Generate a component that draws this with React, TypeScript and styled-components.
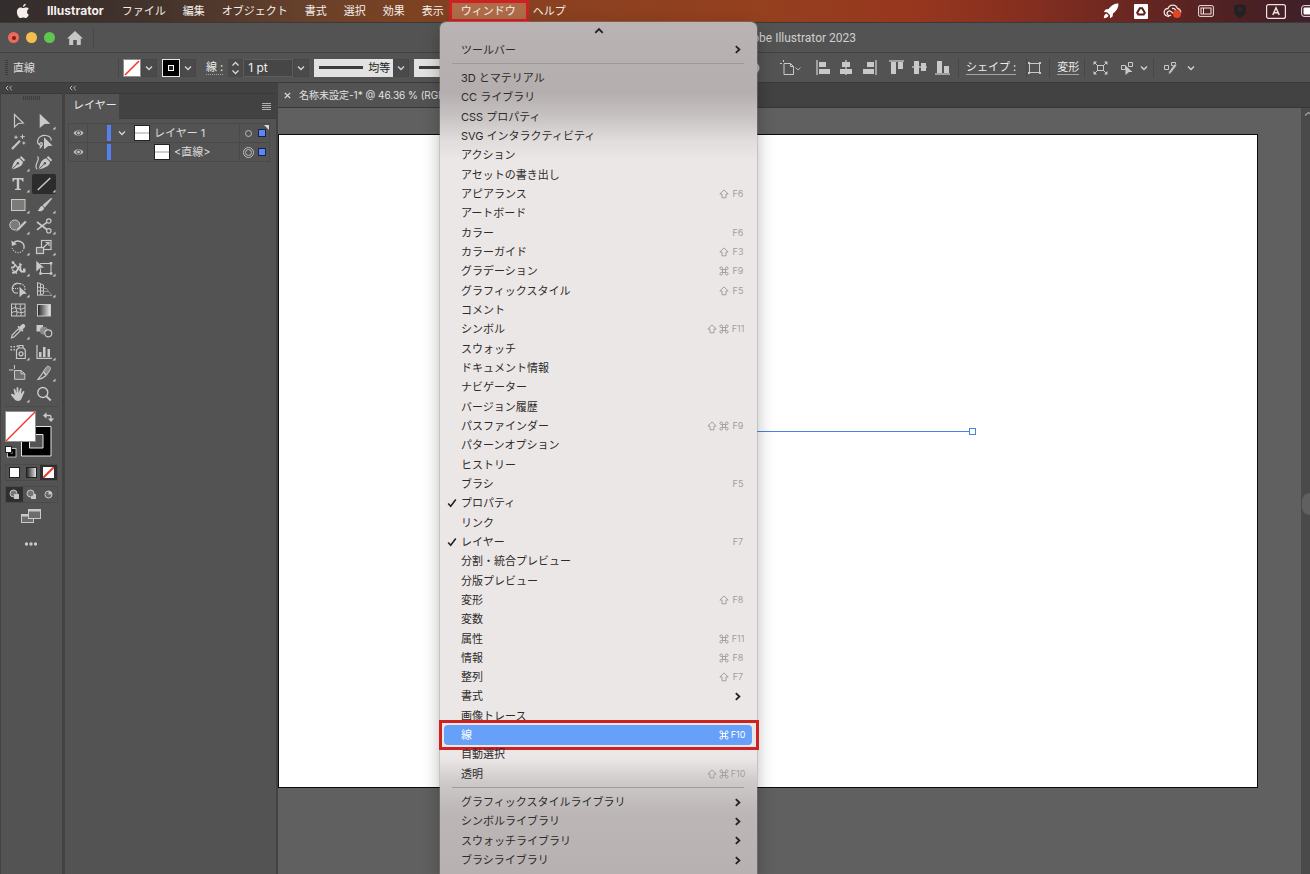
import React from "react";
import styled, { createGlobalStyle, css } from "styled-components";

const GlobalStyle = createGlobalStyle`
  *, *::before, *::after { box-sizing: border-box; }
  body {
    margin: 0;
    background: #535353;
    color: #dcdcdc;
    font: 11px/16px Inter, "Noto Sans CJK JP", sans-serif;
    overflow: hidden;
  }
  button, input {
    margin: 0;
    padding: 0;
    border: 0;
    background: none;
    color: inherit;
    font: inherit;
    text-align: left;
  }
  svg { display: block; flex: none; }
`;

const Screen = styled.div`
  position: relative;
  display: flex;
  flex-direction: column;
  height: 100vh;
  overflow: hidden;
`;

/* ---------- system menu bar ---------- */

const MenuBar = styled.header`
  display: flex;
  align-items: center;
  height: 22px;
  flex: none;
  color: #f4efec;
  overflow: hidden;
  background: linear-gradient(90deg, #332d2d 0%, #43332b 12%, #66402b 23%, #7c4222 31%, #8a4120 42%, #95401f 58%, #97361e 70%, #832e20 79%, #672621 87%, #4b2023 95%, #40202a 100%);
`;

const AppleMark = styled.a`
  display: block;
  padding-left: 16px;
  width: 38px;
`;

const MenuTitles = styled.nav`
  display: flex;
  height: 22px;
  flex: none;
`;

const MenuTitle = styled.button<{ $strong?: boolean; $open?: boolean }>`
  padding: 0 9px 0 8px;
  white-space: nowrap;
  line-height: 20px;
  font-size: 11px;
  ${(p) => p.$strong && css`
    padding: 0 10px 0 9px;
    font-size: 12px;
    font-weight: 700;
  `}
  ${(p) => p.$open && css`
    padding: 0 10px 0 9px;
    margin: 0 -4px;
    background: #ae6c49;
    border: 3px solid #cd2222;
    line-height: 14px;
  `}
`;

const StatusItems = styled.div`
  display: flex;
  align-items: center;
  height: 22px;
  gap: 15px;
  margin-left: auto;
  flex: none;
`;

/* ---------- application window ---------- */

const TitleBar = styled.div`
  display: flex;
  align-items: center;
  flex: none;
  height: 31px;
  padding-left: 8px;
  border-top: 1px solid #3a3a3a;
  border-bottom: 1px solid #424242;
`;

const Lights = styled.div`
  display: flex;
  gap: 7px;
  margin-right: 12px;
`;

const Light = styled.button<{ $color: string }>`
  display: grid;
  place-items: center;
  width: 11px;
  height: 11px;
  border-radius: 50%;
  background: ${(p) => p.$color};
`;

const LightDot = styled.span`
  width: 4px;
  height: 4px;
  border-radius: 50%;
  background: #7a1f18;
`;

const IconButton = styled.button`
  display: block;
  flex: none;
`;

const Rule = styled.span<{ $left?: number; $right?: number }>`
  width: 1px;
  height: 20px;
  flex: none;
  background: #484848;
  margin-left: ${(p) => p.$left ?? 8}px;
  margin-right: ${(p) => p.$right ?? 8}px;
`;

const WindowTitle = styled.h1`
  margin: 0;
  flex: 1;
  padding-right: 454px;
  text-align: right;
  font-family: Roboto, sans-serif;
  font-size: 12px;
  font-weight: 400;
  color: #cfcfcf;
  white-space: nowrap;
`;

const ControlBar = styled.div`
  display: flex;
  align-items: center;
  flex: none;
  height: 29px;
  overflow: hidden;
`;

const ControlStart = styled.div`
  display: flex;
  align-items: center;
  width: 762px;
  flex: none;
  overflow: hidden;
`;

const ControlEnd = styled.div`
  display: flex;
  align-items: center;
  flex: none;
  padding-left: 18px;
`;

const ControlName = styled.span`
  width: 104px;
  flex: none;
  padding-left: 5px;
`;

const Group = styled.div<{ $gap?: number }>`
  display: flex;
  align-items: center;
  flex: none;
  margin-right: ${(p) => p.$gap ?? 5}px;
  height: 18px;
`;

const Swatch = styled.button<{ $dark?: boolean }>`
  display: grid;
  place-items: center;
  width: 18px;
  height: 18px;
  background: ${(p) => (p.$dark ? "#000" : "#fff")};
  border: 1px solid ${(p) => (p.$dark ? "#e6e6e6" : "#8e8e8e")};
`;

const Drop = styled.button`
  display: grid;
  place-items: center;
  width: 16px;
  height: 18px;
  background: #4a4a4a;
  border: 1px solid #464646;
`;

const LinkLabel = styled.a`
  color: #ececec;
  text-decoration: none;
  line-height: 14px;
  border-bottom: 1px solid #a4a4a4;
  white-space: nowrap;
`;

const StrokeLabel = styled.label`
  flex: none;
  color: #ececec;
  line-height: 14px;
  border-bottom: 1px dotted #a4a4a4;
  white-space: nowrap;
  margin-left: 5px;
  margin-right: 5px;
`;

const Stepper = styled.button`
  display: grid;
  place-items: center;
  width: 15px;
  height: 18px;
  background: #4a4a4a;
`;

const WeightInput = styled.input`
  width: 50px;
  height: 18px;
  padding-left: 4px;
  background: #464646;
  border: 1px solid #5c5c5c;
  font-size: 12px;
  color: #f0f0f0;
`;

const Profile = styled.button`
  display: flex;
  align-items: center;
  gap: 5px;
  width: 79px;
  height: 18px;
  padding-left: 5px;
  background: #e2e2e2;
  color: #222;
`;

const ProfileLine = styled.span`
  width: 44px;
  height: 3px;
  background: #3c3c3c;
`;

const Tail = styled.span`
  margin-left: auto;
`;

/* ---------- workspace ---------- */

const Workspace = styled.div`
  display: flex;
  flex: 1;
  min-height: 0;
  background: #424242;
  border-top: 1px solid #3a3a3a;
`;

const Dock = styled.aside<{ $width: number; $gap: number }>`
  display: flex;
  flex-direction: column;
  width: ${(p) => p.$width}px;
  margin-left: ${(p) => p.$gap}px;
  flex: none;
`;

const DockHead = styled.div`
  height: 10px;
  flex: none;
  padding: 2px 4px 0;
`;

const DockBody = styled.div`
  flex: 1;
  background: #535353;
  border-top: 1px solid #3a3a3a;
  overflow: hidden;
`;

const Grip = styled.div`
  width: 17px;
  height: 4px;
  margin: 2px 0 0 22px;
  background: repeating-linear-gradient(90deg, #3c3c3c 0 1px, #535353 1px 2px);
`;

const GripTall = styled.div`
  width: 3px;
  height: 16px;
  flex: none;
  margin-left: 5px;
  background: repeating-linear-gradient(180deg, #3c3c3c 0 1px, #535353 1px 2px);
`;

const ToolGrid = styled.div`
  display: grid;
  grid-template-columns: 24px 24px;
  gap: 1px 2px;
  margin: 11px 0 0 5px;
`;

const ToolButton = styled.button<{ $active?: boolean }>`
  height: 20px;
  border-radius: 2px;
  background: ${(p) => (p.$active ? "#2c2c2c" : "transparent")};
`;

const ToolFoot = styled.div`
  display: flex;
  flex-direction: column;
  align-items: flex-start;
  margin: 2px 4px 0;
  padding-top: 4px;
  border-top: 1px solid #4b4b4b;
`;

const Modes = styled.div`
  display: grid;
  grid-template-columns: repeat(3, 17px);
  margin-top: 5px;
  border: 1px solid #4a4a4a;
`;

const Mode = styled.button<{ $active?: boolean }>`
  display: grid;
  place-items: center;
  height: 15px;
  background: ${(p) => (p.$active ? "#2f2f2f" : "transparent")};
`;

const PanelTabs = styled.div`
  display: flex;
  justify-content: space-between;
  align-items: center;
  height: 25px;
  padding-right: 5px;
  background: #424242;
  border-bottom: 1px solid #3e3e3e;
`;

const PanelTab = styled.button`
  height: 25px;
  padding: 0 2px 2px 8px;
  background: #535353;
  color: #e8e8e8;
`;

const LayerList = styled.ul`
  list-style: none;
  margin: 4px 6px 0 3px;
  padding: 0;
  border: 1px solid #4a4a4a;
  border-bottom: 0;
  position: relative;
`;

const Layer = styled.li`
  display: flex;
  align-items: stretch;
  height: 19px;
  border-bottom: 1px solid #494949;
`;

const LayerEye = styled.button`
  display: grid;
  place-items: center;
  width: 19px;
  flex: none;
  border-right: 1px solid #494949;
`;

const LayerLock = styled.span`
  width: 19px;
  flex: none;
`;

const LayerColor = styled.span`
  width: 4px;
  flex: none;
  margin: 1px 0;
  background: #567ff0;
`;

const LayerMain = styled.span<{ $indent: number }>`
  display: flex;
  align-items: center;
  gap: 4px;
  flex: 1;
  min-width: 0;
  padding-left: ${(p) => p.$indent}px;
  white-space: nowrap;
`;

const Disclosure = styled.button`
  width: 12px;
  flex: none;
`;

const LayerThumb = styled.span`
  width: 16px;
  height: 16px;
  flex: none;
  border: 1px solid #222;
  background: linear-gradient(#fff 6px, #cfcfcf 6px 8px, #fff 8px);
`;

const LayerTarget = styled.span`
  display: flex;
  align-items: center;
  gap: 3px;
  width: 30px;
  flex: none;
  padding-left: 2px;
  border-left: 1px solid #494949;
`;

const Selected = styled.span`
  width: 8px;
  height: 8px;
  background: #5b86f7;
  border: 1px solid #16224a;
`;

const Corner = styled.span`
  position: absolute;
  top: 1px;
  right: 0;
  border-top: 5px solid #d8d8d8;
  border-left: 5px solid transparent;
`;

const Doc = styled.main`
  display: flex;
  flex-direction: column;
  flex: 1;
  min-width: 0;
  margin-left: 2px;
`;

const DocTabs = styled.div`
  display: flex;
  height: 25px;
  flex: none;
  border-bottom: 1px solid #363636;
`;

const DocTab = styled.button`
  display: flex;
  align-items: center;
  gap: 8px;
  min-width: 260px;
  padding: 0 12px 0 6px;
  background: #535353;
  color: #e2e2e2;
  font-size: 10px;
  white-space: nowrap;
`;

const CanvasRow = styled.div`
  display: flex;
  flex: 1;
  min-height: 0;
  background: #606060;
`;

const Artboard = styled.div`
  position: relative;
  flex: 1;
  margin: 26px 43px 86px 0;
  background: #fff;
  border: 1px solid #0a0a0a;
`;

const Path = styled.span`
  position: absolute;
  left: 282px;
  top: 296px;
  width: 412px;
  height: 1px;
  background: #4a80ea;
`;

const Anchor = styled.span`
  position: absolute;
  right: -3px;
  top: -3px;
  width: 7px;
  height: 7px;
  background: #fff;
  border: 1px solid #4a80ea;
`;

const Scroll = styled.div`
  display: flex;
  flex-direction: column;
  width: 9px;
  background: #4a4a4a;
  overflow: hidden;
`;

const Thumb = styled.span`
  width: 20px;
  height: 22px;
  margin: 377px 0 0 1px;
  border-radius: 8px;
  background: #606060;
`;

/* ---------- drop-down menu ---------- */

const Menu = styled.div`
  position: absolute;
  left: 440px;
  top: 22px;
  bottom: 0;
  width: 317px;
  display: flex;
  flex-direction: column;
  padding-bottom: 4px;
  border-radius: 6px 6px 0 0;
  color: #2c2a2a;
  background: linear-gradient(180deg, #b9b3b3 0, #b4aeae 70px, #c9c4c4 96px, #e1dcdc 118px, #ece7e7 138px, #ece7e7 calc(100% - 116px), #cfcaca calc(100% - 92px), #bcb6b6 calc(100% - 62px), #b7b1b1 100%);
  box-shadow: 0 0 0 1px rgba(150, 145, 145, 0.35), 0 6px 18px rgba(0, 0, 0, 0.28);
`;

const MenuArrow = styled.button`
  display: grid;
  place-items: center;
  height: 18px;
  flex: none;
`;

const MenuRow = styled.button<{ $on?: boolean }>`
  position: relative;
  display: flex;
  align-items: center;
  flex: 1 1 0;
  min-height: 0;
  margin: 0 5px 0 4px;
  padding: 0 7px 0 3px;
  border-radius: 4px;
  line-height: 16px;
  color: ${(p) => (p.$on ? "#fff" : "inherit")};
  background: ${(p) => (p.$on ? "#66a0f8" : "none")};
`;

const Tick = styled.span`
  width: 14px;
  flex: none;
`;

const RowLabel = styled.span`
  flex: 1;
  white-space: nowrap;
`;

const Keys = styled.span<{ $on?: boolean }>`
  display: flex;
  align-items: center;
  gap: 2px;
  color: ${(p) => (p.$on ? "#fff" : "#a39e9e")};
`;

const KeyName = styled.span`
  width: 14px;
  display: flex;
  justify-content: center;
  font-size: 9px;
  line-height: 10px;
`;

const SubArrow = styled.span`
  padding-right: 3px;
`;

const MenuRule = styled.hr`
  flex: none;
  width: 292px;
  height: 1px;
  margin: 4px 12px;
  border: 0;
  background: #9f9999;
`;

const Callout = styled.span`
  position: absolute;
  inset: -5px -7px -5px -5px;
  border: 3px solid #cd2222;
  pointer-events: none;
`;

/* ---------- icons ---------- */

const L = "#c9c9c9";

const Chevron = ({ d = "down", size = 8, w = 1.3, c = "#d6d6d6" }: { d?: string; size?: number; w?: number; c?: string }) => {
  const path = d === "down" ? "M1 2.5 L4 5.5 L7 2.5" : d === "up" ? "M1 5.5 L4 2.5 L7 5.5" : "M2.5 1 L5.7 4 L2.5 7";
  return (
    <svg width={size} height={size} viewBox="0 0 8 8" fill="none" stroke={c} strokeWidth={w}>
      <path d={path} />
    </svg>
  );
};

const Shift = () => (
  <svg width="10" height="10" viewBox="0 0 10 10" fill="none" stroke="currentColor" strokeWidth="1">
    <path d="M5 .9 L9.2 5 H7 V8.8 H3 V5 H.8 Z" strokeLinejoin="round" />
  </svg>
);

const Cmd = () => (
  <svg width="10" height="10" viewBox="0 0 10 10" fill="none" stroke="currentColor" strokeWidth="1">
    <path d="M3.5 3.5 H6.5 V6.5 H3.5 Z M3.5 3.5 H2.3 A1.3 1.3 0 1 1 3.5 2.3 Z M6.5 3.5 V2.3 A1.3 1.3 0 1 1 7.7 3.5 Z M6.5 6.5 H7.7 A1.3 1.3 0 1 1 6.5 7.7 Z M3.5 6.5 V7.7 A1.3 1.3 0 1 1 2.3 6.5 Z" />
  </svg>
);

const Check = () => (
  <svg width="10" height="10" viewBox="0 0 10 10" fill="none" stroke="#222" strokeWidth="1.6">
    <path d="M1.2 5.4 L3.7 8.3 L8.8 1.6" />
  </svg>
);

const Collapse = () => (
  <svg width="8" height="6" viewBox="0 0 8 6" fill="none" stroke="#b4b4b4" strokeWidth="1">
    <path d="M3.2 .8 L1 3 L3.2 5.2 M6.8 .8 L4.6 3 L6.8 5.2" />
  </svg>
);

const nib = (
  <>
    <path d="M13.2 3 L17.2 7 L15.9 8.4 L11.8 4.4 Z" fill={L} />
    <path d="M11.2 5.2 L15 9 C14.6 12 13 14 3.6 16.6 C5 9.5 7 6.2 11.2 5.2 Z" fill={L} />
    <path d="M3.6 16.6 L9.3 10.9" stroke="#535353" strokeWidth="1" />
    <circle cx="9.9" cy="10.3" r="1.2" fill="#535353" />
  </>
);

const stroke = { fill: "none", stroke: L, strokeWidth: 1.2 };

const tools: { name: string; flag?: boolean; art: React.ReactNode }[] = [
  { name: "選択", art: <path d="M6.5 3.5 L15.3 12 L10.3 12.5 L6.5 16 Z" {...stroke} /> },
  { name: "ダイレクト選択", flag: true, art: <path d="M5.7 2.7 L16.3 12.7 L10.5 13 L5.7 16.9 Z" fill={L} /> },
  {
    name: "自動選択",
    art: (
      <g {...stroke}>
        <path d="M4 17 L12 8.8" strokeWidth="2" />
        <path d="M8 3.5 V7 M6.2 5.2 H9.8 M14.5 2.5 V7 M12.2 4.7 H16.8 M15.8 9.5 V12.5 M14.3 11 H17.3" strokeWidth="1" />
      </g>
    ),
  },
  {
    name: "なげなわ",
    art: (
      <>
        <path d="M8 13.5 C4.5 13 3.3 10.8 3.6 8.6 C4.2 5 8 3.2 11.5 3.5 C15.5 3.8 17.5 6 17.2 8.5 M7.8 13.8 C5 14.6 5 11 7.3 10.7 C9 10.7 8.8 14 5.6 16.3" {...stroke} />
        <path d="M10 5.3 L18.6 13.7 L14.2 14 L10 17.3 Z" fill={L} />
      </>
    ),
  },
  { name: "ペン", flag: true, art: nib },
  {
    name: "曲線",
    art: (
      <>
        <g transform="translate(1 0)">{nib}</g>
        <path d="M3 16 C-1 12 7 7 3.5 3.5" {...stroke} />
      </>
    ),
  },
  { name: "文字", flag: true, art: <path d="M4.5 4 H15.5 V7.5 H14.2 C14 5.8 13.7 5.5 11.2 5.5 V14.5 L13 15 V16 H7 V15 L8.800 14.5 V5.5 C6.3 5.5 6 5.8 5.8 7.5 H4.5 Z" fill={L} /> },
  { name: "直線", flag: true, art: <path d="M3.7 16 L16.3 4" {...stroke} strokeWidth="1.5" /> },
  { name: "長方形", flag: true, art: <rect x="3.5" y="4.5" width="13.5" height="11" fill="#7b7b78" stroke={L} /> },
  {
    name: "ブラシ",
    flag: true,
    art: (
      <>
        <path d="M17.3 3 L8.8 10.2 L10.8 12.3 L17.8 3.8 Z" fill={L} stroke={L} strokeWidth=".5" />
        <path d="M8.2 10.8 L10.2 12.9 C9.5 16.4 6 16.8 3.5 15.8 C5.6 15 5.2 11.5 8.2 10.8 Z" fill={L} />
      </>
    ),
  },
  {
    name: "Shaper",
    flag: true,
    art: (
      <>
        <circle cx="6.8" cy="9" r="5" fill="#7b7b78" stroke={L} />
        <path d="M17 4.5 L18.8 6.3 L11 14.2 L7.5 15.7 L9 12.5 Z" fill={L} stroke="#535353" strokeWidth=".5" />
      </>
    ),
  },
  {
    name: "はさみ",
    flag: true,
    art: (
      <g {...stroke}>
        <circle cx="14.8" cy="5" r="2.2" />
        <circle cx="14.8" cy="14.8" r="2.2" />
        <path d="M3 6 L12.8 13.5 M3 13.8 L12.8 6.3" strokeWidth="1.6" />
      </g>
    ),
  },
  {
    name: "回転",
    flag: true,
    art: (
      <>
        <path d="M5.5 6.2 A6 6 0 0 1 16 11" {...stroke} strokeWidth="1.4" />
        <path d="M16 11 A6 6 0 0 1 4.3 11" {...stroke} strokeDasharray="1.2 1.3" />
        <path d="M3.3 3.5 L4 9 L8.8 7.3 Z" fill={L} />
      </>
    ),
  },
  {
    name: "拡大・縮小",
    flag: true,
    art: (
      <g {...stroke}>
        <rect x="7.5" y="3.5" width="9.5" height="9" />
        <rect x="2.5" y="10.5" width="7" height="6" fill="#6b6b6b" />
        <path d="M9.5 10.5 L14.5 5.8 M11.5 5.5 H15 V9" />
      </g>
    ),
  },
  {
    name: "線幅",
    flag: true,
    art: (
      <>
        <path d="M3 9.500 C5 10 6.500 9 7.500 6.500 M4 14.500 C7 15.500 9.500 13 10.500 9.500 C11 8 13 8.500 12.500 10.500 C12 12.500 14 14.500 17.500 13.500" {...stroke} strokeWidth="1.8" />
        <path d="M5 4.500 L14 14.500 M4 11.500 L9 15.500" {...stroke} />
        <path d="M3.800 3.300 h2.400 v2.400 h-2.400z M11.500 4.500 L14.500 7 L11 8.500 Z M15 10.500 h2.500 v2.500 h-2.500z" fill={L} />
      </>
    ),
  },
  {
    name: "自由変形",
    flag: true,
    art: (
      <>
        <rect x="6.5" y="5.5" width="10.5" height="10" {...stroke} strokeWidth="1" />
        <path d="M15.8 4 h2.5 v2.5 h-2.5z M15.8 14.3 h2.5 v2.5 h-2.5z M5.3 14.3 h2.5 v2.5 h-2.5z" fill={L} />
        <path d="M2 2.3 L10.5 9.8 L6.3 10.3 L2 14 Z" fill={L} stroke="#535353" strokeWidth=".6" />
      </>
    ),
  },
  {
    name: "シェイプ形成",
    flag: true,
    art: (
      <>
        <path d="M12.5 5 A5 4.8 0 1 0 7 14 H10" {...stroke} />
        <path d="M7 5 C12 3.5 17 5.5 17 9.5 C17 12.5 15 14 13 14" {...stroke} strokeDasharray="1.5 1" />
        <path d="M5 9.5 H11" {...stroke} strokeDasharray="1 1" />
        <path d="M11.5 7.8 L18.8 14.8 L15 15 L11.5 18.3 Z" fill={L} />
      </>
    ),
  },
  {
    name: "遠近グリッド",
    flag: true,
    art: (
      <>
        <path d="M3.5 3.500 L9.5 6 V15 L3.500 16.500 Z M6.5 5 V15.500 M3.5 8 L9.5 9 M3.5 12 H9.5" {...stroke} strokeWidth="1" />
        <path d="M9.5 9.500 H12.500 L14.500 12.500 H9.5 M3.500 16.500 H18 L14.500 12.500" stroke="#969696" fill="none" />
      </>
    ),
  },
  {
    name: "メッシュ",
    art: (
      <g {...stroke} strokeWidth="1">
        <rect x="3.5" y="4" width="13.5" height="12" />
        <path d="M3.5 9 C8 5 11 12 17 7.5 M3.5 13 C8 9 12 15 17 11.5 M8 4 C6 8 11 12 8 16 M13 4 C10.5 8 15 12 12.5 16" />
      </g>
    ),
  },
  { name: "グラデーション", art: <rect x="3.5" y="4.5" width="13" height="11.5" fill="url(#tool-grad)" stroke={L} /> },
  {
    name: "スポイト",
    flag: true,
    art: (
      <>
        <path d="M10.3 7.8 L12.3 9.8 L6 16 L3.5 16.8 L4.2 14 Z" {...stroke} />
        <path d="M9.3 5.8 L10.5 4.8 L11.6 5.8 L13.8 3.4 C15.7 1.8 18.4 4.4 16.8 6.3 L14.5 8.5 L15.5 9.7 L14.4 10.8 Z" fill={L} />
      </>
    ),
  },
  {
    name: "ブレンド",
    art: (
      <>
        <rect x="2.5" y="4" width="6.5" height="6.5" fill={L} />
        <circle cx="10" cy="9.8" r="4" fill="#8c8c8c" />
        <circle cx="14.3" cy="12.3" r="3.5" fill="#535353" stroke={L} strokeWidth="1.2" />
      </>
    ),
  },
  {
    name: "シンボルスプレー",
    flag: true,
    art: (
      <>
        <path d="M8.5 8 L10.5 6 H15.5 L17.3 8 V16.5 H8.5 Z M11 6 V3.5 H15 V6" {...stroke} />
        <circle cx="13" cy="11.8" r="2" {...stroke} />
        <path d="M2.5 4 h1.5 v1.5 h-1.5z M5.5 4 h1.5 v1.5 h-1.5z M2.5 7 h1.5 v1.5 h-1.5z M5.5 7 h1.5 v1.5 h-1.5z M8.5 3.5 h1.5 v1.5 h-1.5z" fill={L} />
      </>
    ),
  },
  {
    name: "棒グラフ",
    flag: true,
    art: (
      <>
        <path d="M3 3 V16.3 H18" {...stroke} />
        <path d="M5 10 h2.5 v5 h-2.5z M9 5 h2.5 v10 h-2.5z M13.5 7 h2.5 v8 h-2.5z" fill={L} />
      </>
    ),
  },
  {
    name: "アートボード",
    art: (
      <>
        <path d="M6.5 2 V6 M1 7 H5.5" stroke={L} />
        <path d="M6.5 7.5 H13 L16.8 10.8 V16.3 H6.5 Z" fill="#6d6d6d" stroke={L} />
        <path d="M13 7.5 V10.8 H16.8" fill="none" stroke={L} />
      </>
    ),
  },
  {
    name: "スライス",
    flag: true,
    art: (
      <>
        <path d="M4 16.5 C7 16 10 14.5 12 12.5 L9.5 9 Z" {...stroke} />
        <path d="M9.3 8.3 L13 3.5 C14.5 2.5 17.3 4.5 16.3 6.5 L12.7 12 Z" fill="#8c8c8c" stroke={L} />
      </>
    ),
  },
  {
    name: "手のひら",
    flag: true,
    art: <path d="M6.8 11 L5.6 5.6 C5.5 4.6 7 4.3 7.3 5.3 L8.5 9 L8.6 3.9 C8.7 2.8 10.2 2.8 10.3 3.9 L10.6 9 L12 4.8 C12.4 3.8 13.8 4.2 13.6 5.2 L12.9 10 L15 7.3 C15.8 6.5 16.8 7.3 16.3 8.2 L13.6 14.5 C13 16 12 17 10.3 17 C8 17 7.2 16.3 6.3 15 L3.2 11.3 C2.6 10.3 3.6 9.5 4.6 10 Z" fill={L} />,
  },
  {
    name: "ズーム",
    art: (
      <>
        <circle cx="8.8" cy="8.5" r="5" {...stroke} strokeWidth="1.4" />
        <path d="M12.4 12.2 L16.8 16.5" {...stroke} strokeWidth="2" />
      </>
    ),
  },
];

const FillStroke = () => (
  <svg width="50" height="48" viewBox="0 0 50 48">
    <path d="M16.5 15.5 h29.5 v29.5 h-29.5z M24.5 23.5 h13.5 v13.5 h-13.5z" fill="#000" fillRule="evenodd" stroke="#e4e4e4" />
    <rect x=".5" y=".5" width="30" height="30" fill="#fff" stroke="#8f8f8f" />
    <path d="M1 30 L30 1" stroke="#ee3a2c" strokeWidth="1.5" />
    <path d="M40.5 4.5 H44.5 Q46 4.5 46 6 V9" fill="none" stroke={L} strokeWidth="1.3" />
    <path d="M41.5 1.3 V7.7 L38 4.5 Z M42.8 7.5 H49.2 L46 11 Z" fill={L} />
    <rect x="4" y="39" width="5.5" height="5.5" fill="none" stroke="#000" strokeWidth="3" />
    <rect x="2.5" y="37.5" width="8.5" height="8.5" fill="none" stroke="#ddd" strokeWidth=".8" />
    <rect x=".5" y="35.5" width="6" height="6" fill="#fff" stroke="#222" />
  </svg>
);

const ToolPanel = () => (
  <Dock $width={61} $gap={1}>
    <DockHead><Collapse /></DockHead>
    <DockBody>
      <Grip />
      <ToolGrid>
        {tools.map((t) => (
          <ToolButton key={t.name} aria-label={t.name} $active={t.name === "直線"}>
            <svg width="24" height="20" viewBox="-2 0 24 20">
              {t.name === "グラデーション" && (
                <defs>
                  <linearGradient id="tool-grad">
                    <stop offset="0" stopColor="#222" />
                    <stop offset="1" stopColor="#eee" />
                  </linearGradient>
                </defs>
              )}
              {t.art}
              {t.flag && <path d="M21.5 15.5 V18.5 H18.5 Z" fill={L} />}
            </svg>
          </ToolButton>
        ))}
      </ToolGrid>
      <ToolFoot>
        <IconButton aria-label="塗りと線"><FillStroke /></IconButton>
        <Modes>
          <Mode aria-label="カラー">
            <svg width="11" height="11"><rect x=".5" y=".5" width="10" height="10" fill="#fff" stroke="#222" /></svg>
          </Mode>
          <Mode aria-label="グラデーション塗り">
            <svg width="11" height="11"><rect x=".5" y=".5" width="10" height="10" fill="url(#tool-grad)" stroke="#222" /></svg>
          </Mode>
          <Mode aria-label="なし" $active>
            <svg width="11" height="11"><rect width="11" height="11" fill="#fff" /><path d="M0 11 L11 0" stroke="#ee3a2c" strokeWidth="2" /></svg>
          </Mode>
        </Modes>
        <Modes>
          <Mode aria-label="標準描画" $active>
            <svg width="11" height="11"><circle cx="4.5" cy="4.5" r="3.5" fill="#777" stroke={L} /><rect x="5" y="5" width="5" height="5" fill={L} /></svg>
          </Mode>
          <Mode aria-label="背面描画">
            <svg width="11" height="11"><rect x="5" y="5" width="5" height="5" fill={L} /><circle cx="4.5" cy="4.5" r="3.5" fill="#777" stroke={L} /></svg>
          </Mode>
          <Mode aria-label="内側描画">
            <svg width="11" height="11"><circle cx="5.5" cy="5.5" r="3.5" fill="#666" stroke={L} /><path d="M5.5 5.5 H9 A3.5 3.5 0 0 0 5.5 2 Z" fill={L} /></svg>
          </Mode>
        </Modes>
        <IconButton aria-label="スクリーンモード">
          <svg width="38" height="36" viewBox="0 2 38 36">
            <rect x="16.5" y="13.5" width="12" height="8" fill="#6d6d6d" stroke={L} />
            <path d="M16 14.5 h13" stroke={L} strokeWidth="2" />
            <rect x="23.5" y="8.5" width="12" height="9" fill="#6d6d6d" stroke={L} />
            <path d="M23 9.5 h13" stroke={L} strokeWidth="2" />
          </svg>
        </IconButton>
        <IconButton aria-label="ツールバーを編集">
          <svg width="50" height="10"><g fill={L}><circle cx="21.500" cy="5" r="1.7" /><circle cx="26" cy="5" r="1.7" /><circle cx="30.500" cy="5" r="1.7" /></g></svg>
        </IconButton>
      </ToolFoot>
    </DockBody>
  </Dock>
);

const Eye = () => (
  <svg width="11" height="8" viewBox="0 0 11 8">
    <path d="M.5 4 C2.5 .3 8.5 .3 10.5 4 C8.5 7.7 2.5 7.7 .5 4 Z" fill="#bdbdbd" />
    <circle cx="5.5" cy="4" r="2" fill="#bdbdbd" stroke="#4f4f4f" strokeWidth="1" />
  </svg>
);

const LayerPanel = () => (
  <Dock $width={211} $gap={3}>
    <DockHead><Collapse /></DockHead>
    <DockBody>
      <PanelTabs>
        <PanelTab>レイヤー</PanelTab>
        <IconButton aria-label="パネルメニュー">
          <svg width="9" height="9" viewBox="0 0 9 9" stroke="#bcbcbc"><path d="M0 1.5 H9 M0 3.500 H9 M0 5.500 H9 M0 7.500 H9" strokeWidth=".9" /></svg>
        </IconButton>
      </PanelTabs>
      <LayerList>
        <Layer>
          <LayerEye aria-label="レイヤー 1 の表示"><Eye /></LayerEye>
          <LayerLock />
          <LayerColor />
          <LayerMain $indent={7}>
            <Disclosure aria-label="レイヤー 1 を開閉"><Chevron /></Disclosure>
            <LayerThumb />
            レイヤー 1
          </LayerMain>
          <LayerTarget>
            <svg width="13" height="13" viewBox="0 0 13 13" fill="none" stroke="#bcbcbc"><circle cx="6.5" cy="6.5" r="3" /></svg>
            <Selected />
          </LayerTarget>
        </Layer>
        <Layer>
          <LayerEye aria-label="直線の表示"><Eye /></LayerEye>
          <LayerLock />
          <LayerColor />
          <LayerMain $indent={43}>
            <LayerThumb />
            &lt;直線&gt;
          </LayerMain>
          <LayerTarget>
            <svg width="13" height="13" viewBox="0 0 13 13" fill="none" stroke="#bcbcbc"><circle cx="6.5" cy="6.5" r="5" /><circle cx="6.5" cy="6.5" r="3" /></svg>
            <Selected />
          </LayerTarget>
        </Layer>
        <Corner />
      </LayerList>
    </DockBody>
  </Dock>
);

/* ---------- menu data ---------- */

type Item = { label: string; mods?: string; keyName?: string; sub?: boolean; checked?: boolean; on?: boolean };

const main: Item[] = [
  { label: "3D とマテリアル" },
  { label: "CC ライブラリ" },
  { label: "CSS プロパティ" },
  { label: "SVG インタラクティビティ" },
  { label: "アクション" },
  { label: "アセットの書き出し" },
  { label: "アピアランス", mods: "s", keyName: "F6" },
  { label: "アートボード" },
  { label: "カラー", keyName: "F6" },
  { label: "カラーガイド", mods: "s", keyName: "F3" },
  { label: "グラデーション", mods: "c", keyName: "F9" },
  { label: "グラフィックスタイル", mods: "s", keyName: "F5" },
  { label: "コメント" },
  { label: "シンボル", mods: "sc", keyName: "F11" },
  { label: "スウォッチ" },
  { label: "ドキュメント情報" },
  { label: "ナビゲーター" },
  { label: "バージョン履歴" },
  { label: "パスファインダー", mods: "sc", keyName: "F9" },
  { label: "パターンオプション" },
  { label: "ヒストリー" },
  { label: "ブラシ", keyName: "F5" },
  { label: "プロパティ", checked: true },
  { label: "リンク" },
  { label: "レイヤー", checked: true, keyName: "F7" },
  { label: "分割・統合プレビュー" },
  { label: "分版プレビュー" },
  { label: "変形", mods: "s", keyName: "F8" },
  { label: "変数" },
  { label: "属性", mods: "c", keyName: "F11" },
  { label: "情報", mods: "c", keyName: "F8" },
  { label: "整列", mods: "s", keyName: "F7" },
  { label: "書式", sub: true },
  { label: "画像トレース" },
  { label: "線", mods: "c", keyName: "F10", on: true },
  { label: "自動選択" },
  { label: "透明", mods: "sc", keyName: "F10" },
];

const libraries: Item[] = [
  { label: "グラフィックスタイルライブラリ", sub: true },
  { label: "シンボルライブラリ", sub: true },
  { label: "スウォッチライブラリ", sub: true },
  { label: "ブラシライブラリ", sub: true },
];

const Row = ({ item }: { item: Item }) => (
  <MenuRow role="menuitem" $on={item.on}>
    <Tick>{item.checked && <Check />}</Tick>
    <RowLabel>{item.label}</RowLabel>
    {item.keyName && (
      <Keys $on={item.on}>
        {item.mods?.includes("s") && <Shift />}
        {item.mods?.includes("c") && <Cmd />}
        <KeyName>{item.keyName}</KeyName>
      </Keys>
    )}
    {item.sub && <SubArrow><Chevron d="right" size={9} w={1.6} c="#222" /></SubArrow>}
    {item.on && <Callout />}
  </MenuRow>
);

const titles = ["ファイル", "編集", "オブジェクト", "書式", "選択", "効果", "表示", "ウィンドウ", "ヘルプ"];

const Status = () => (
  <StatusItems>
    <svg width="16" height="16" viewBox="0 0 16 16" fill="#fff">
      <path d="M15.5 .5 C11 .5 8 2.5 5.5 6 L2.5 6.5 L.8 9 L4 9.2 L6.9 12 L7 15.2 L9.6 13.5 L10 10.5 C13.5 8 15.5 5 15.5 .5 Z M3.5 10.5 C1.5 11 1 13 .8 15.2 C3 15 5 14.5 5.5 12.5 Z" />
    </svg>
    <svg width="14" height="15" viewBox="0 0 14 15">
      <rect width="14" height="15" rx="1" fill="#fff" />
      <path d="M5.8 4.300 H8.2 L10.800 8.800 L9.700 10.500 H4.300 L3.200 8.800 Z" fill="none" stroke="#5a1d1b" strokeWidth="2" />
    </svg>
    <svg width="20" height="16" viewBox="0 0 20 16" fill="none" stroke="#efe4e0" strokeWidth="1.3">
      <path d="M6 13.5 C-.5 13 0 5.5 5 5.5 C6.5 1 13 1 14.5 5.5 C17 6 18 8 17.5 10" />
      <path d="M10.5 10.5 L8 8.5 A2.3 2.3 0 1 0 8 12 M9 5.5 C12 5 13 7 12.5 9" />
      <circle cx="14" cy="11" r="4" fill="#e0461f" stroke="none" />
    </svg>
    <svg width="16" height="12" viewBox="0 0 16 12" fill="none" stroke="#efe4e0">
      <rect x=".6" y=".6" width="14.8" height="10.8" rx="1.5" /><rect x="3" y="3" width="10" height="6" /><path d="M5.5 3 V9" />
    </svg>
    <svg width="22" height="14" viewBox="0 0 22 14">
      <path d="M5 1.5 L11 0 L17 1.5 V7 C17 10 14 12.5 11 14 C8 12.5 5 10 5 7 Z" fill="#222225" />
      <path d="M11 3 V8 M8.5 5.5 H13.5" stroke="#4b2023" />
    </svg>
    <svg width="20" height="15" viewBox="0 0 20 15" fill="none" stroke="#efe4e0">
      <rect x=".6" y=".6" width="18.8" height="13.8" rx="2" strokeWidth="1.2" />
      <path d="M6.8 11 L10 3.8 L13.2 11 M8 8.7 H12" strokeWidth="1.5" />
    </svg>
    <svg width="9" height="12" viewBox="0 0 9 12">
      <rect x=".6" y=".6" width="20" height="10.8" rx="2.5" fill="none" stroke="#efe4e0" /><rect x="2.5" y="2.5" width="8" height="7" rx="1" fill="#fff" />
    </svg>
  </StatusItems>
);

const aligns = [
  { d: "M1 0 V15", r: [[3, 2, 7, 5], [3, 9, 11, 5]], gap: 8 },
  { d: "M7 0 V15", r: [[3, 2, 8, 5], [1, 9, 12, 5]], gap: 9 },
  { d: "M13 0 V15", r: [[4, 2, 7, 5], [0, 9, 11, 5]], gap: 11 },
  { d: "M0 1 H15", r: [[2, 2, 5, 12], [9, 2, 5, 7]], gap: 8 },
  { d: "M0 7 H15", r: [[2, 1, 5, 13], [9, 3, 5, 8]], gap: 8 },
  { d: "M0 14 H15", r: [[2, 1, 5, 12], [9, 6, 5, 7]], gap: 0 },
];

const Controls = () => (
  <ControlBar>
    <ControlStart>
      <GripTall />
      <ControlName>直線</ControlName>
      <Rule $left={6} $right={4} />
      <Group>
        <Swatch aria-label="塗り"><svg width="16" height="16"><path d="M1 15 L15 1" stroke="#ee3a2c" strokeWidth="1.6" /></svg></Swatch>
        <Drop aria-label="塗りの一覧"><Chevron /></Drop>
      </Group>
      <Group>
        <Swatch $dark aria-label="線の色"><svg width="6" height="6"><rect x=".5" y=".5" width="5" height="5" fill="#222" stroke="#fff" /></svg></Swatch>
        <Drop aria-label="線の一覧"><Chevron /></Drop>
      </Group>
      <StrokeLabel htmlFor="weight">線 :</StrokeLabel>
      <Group>
        <Stepper aria-label="線幅の増減"><svg width="9" height="14" viewBox="0 0 9 14" fill="none" stroke="#d6d6d6" strokeWidth="1.3"><path d="M1.5 4.5 L4.5 1.5 L7.5 4.5 M1.5 9.5 L4.5 12.5 L7.5 9.5" /></svg></Stepper>
        <WeightInput id="weight" defaultValue="1 pt" />
        <Drop aria-label="線幅の一覧"><Chevron /></Drop>
      </Group>
      <Group>
        <Profile><ProfileLine />均等</Profile>
        <Drop aria-label="プロファイルの一覧"><Chevron /></Drop>
      </Group>
      <Group>
        <Profile aria-label="ブラシ定義"><ProfileLine /></Profile>
      </Group>
      <Tail><svg width="14" height="14"><circle cx="5.5" cy="7" r="6" fill="#b9b9b9" /></svg></Tail>
    </ControlStart>
    <ControlEnd>
      <Group $gap={14}>
        <IconButton aria-label="整列の基準">
          <svg width="22" height="16" viewBox="0 0 22 16" fill="none" stroke={L}>
            <path d="M3.5 0 V2 M0 3.5 H2 M4 3.5 H10.5 L13.5 6.5 V14.5 H4 Z M10.5 3.5 V6.5 H13.5" /><path d="M15.5 7.5 L18 10 L20.5 7.5" stroke="#bbb" />
          </svg>
        </IconButton>
      </Group>
      {aligns.map((a) => (
        <Group key={a.d} $gap={a.gap}>
          <IconButton aria-label="整列">
            <svg width="15" height="15" viewBox="0 0 15 15" fill={L}>
              <path d={a.d} stroke={L} strokeWidth="1.3" />
              {a.r.map(([x, y, w, h]) => <rect key={y * 20 + x} x={x} y={y} width={w} height={h} />)}
            </svg>
          </IconButton>
        </Group>
      ))}
      <Rule $left={8} $right={7} />
      <LinkLabel href="#shape">シェイプ :</LinkLabel>
      <Group $gap={7}>
        <Rule $left={10} $right={0} />
        <IconButton aria-label="シェイプの形">
          <svg width="15" height="14" viewBox="0 0 15 14" fill="none" stroke={L}>
            <rect x="2.5" y="2.5" width="10" height="9" /><path d="M1 1 h2 v2 h-2z M12 1 h2 v2 h-2z M1 11 h2 v2 h-2z M12 11 h2 v2 h-2z" fill={L} stroke="none" />
          </svg>
        </IconButton>
      </Group>
      <Rule $left={0} $right={7} />
      <LinkLabel href="#transform">変形</LinkLabel>
      <Rule $left={5} $right={8} />
      <Group $gap={12}>
        <IconButton aria-label="オブジェクトを編集">
          <svg width="15" height="14" viewBox="0 0 15 14" fill="none" stroke={L}>
            <rect x="4.5" y="4.5" width="6" height="5" /><path d="M1 1 L4 4 M14 1 L11 4 M1 13 L4 10 M14 13 L11 10" /><path d="M.5 .5 H4 L.5 4 Z M14.5 .5 H11 L14.5 4 Z M.5 13.5 H4 L.5 10 Z M14.5 13.5 H11 L14.5 10 Z" fill={L} stroke="none" />
          </svg>
        </IconButton>
      </Group>
      <Group $gap={6}>
        <IconButton aria-label="類似オブジェクト">
          <svg width="14" height="14" viewBox="0 0 14 14" fill="none" stroke={L}>
            <path d="M1.5 4.5 h4 v4 h-4z M8.5 1.5 h4 v4 h-4z" /><path d="M5.5 4.5 L12.5 11 H9 L5.5 14 Z" fill={L} stroke="none" />
          </svg>
        </IconButton>
      </Group>
      <Group><IconButton aria-label="類似の一覧"><Chevron /></IconButton></Group>
      <Rule $left={0} $right={9} />
      <Group $gap={9}>
        <IconButton aria-label="編集の選択">
          <svg width="15" height="14" viewBox="0 0 15 14" fill="none" stroke={L}>
            <path d="M1.5 4.5 h4 v4 h-4z M8.5 1.5 h4 v3 h-4z" /><path d="M14 4 L8 12 L5.5 13.5 L6 10.5 L11.5 3 Z" fill={L} stroke="#535353" strokeWidth=".6" />
          </svg>
        </IconButton>
      </Group>
      <IconButton aria-label="編集の一覧"><Chevron /></IconButton>
    </ControlEnd>
  </ControlBar>
);

export default function App() {
  return (
    <Screen>
      <GlobalStyle />
      <MenuBar>
        <AppleMark href="#apple" aria-label="Apple">
          <svg width="14" height="16" viewBox="0 0 14 16" fill="#f4efec">
            <path d="M9.8 .8 C9.9 2.3 8.6 3.9 7 3.9 C6.8 2.4 8.2 1 9.8 .8 Z M12.8 11.8 C12 13.7 11 15.1 9.8 15.1 C8.8 15.1 8.5 14.5 7.3 14.5 C6.1 14.5 5.7 15.1 4.8 15.1 C2.9 15.1 .9 11.8 .9 8.9 C.9 6 2.7 4.4 4.5 4.4 C5.7 4.4 6.5 5.1 7.3 5.1 C8 5.1 9 4.3 10.4 4.4 C11.2 4.4 12.2 4.8 12.8 5.7 C10.3 7.2 10.7 10.7 12.8 11.8 Z" />
          </svg>
        </AppleMark>
        <MenuTitles>
          <MenuTitle $strong>Illustrator</MenuTitle>
          {titles.map((t) => <MenuTitle key={t} $open={t === "ウィンドウ"}>{t}</MenuTitle>)}
        </MenuTitles>
        <Status />
      </MenuBar>
      <TitleBar>
        <Lights>
          <Light $color="#ec6a5e" aria-label="閉じる"><LightDot /></Light>
          <Light $color="#f5bf4f" aria-label="しまう" />
          <Light $color="#61c554" aria-label="拡大" />
        </Lights>
        <IconButton aria-label="ホーム">
          <svg width="16" height="14" viewBox="0 0 16 14" fill="#c6c6c6"><path d="M8 0 L16 7.5 H13.8 V14 H9.8 V9 H6.2 V14 H2.2 V7.5 H0 Z" /></svg>
        </IconButton>
        <Rule $left={10} $right={0} />
        <WindowTitle>Adobe Illustrator 2023</WindowTitle>
      </TitleBar>
      <Controls />
      <Workspace>
        <ToolPanel />
        <LayerPanel />
        <Doc>
          <DocTabs>
            <DocTab>
              <svg width="7" height="7" viewBox="0 0 7 7" stroke="#e2e2e2" strokeWidth="1.2"><path d="M.8 .8 L6.2 6.2 M6.2 .8 L.8 6.2" /></svg>
              名称未設定-1* @ 46.36 % (RGB
            </DocTab>
          </DocTabs>
          <CanvasRow>
            <Artboard><Path><Anchor /></Path></Artboard>
            <Scroll>
              <svg width="14" height="8" viewBox="0 0 14 8" fill="none" stroke="#a4a4a4" strokeWidth="1.2"><path d="M4 7.5 L7.5 4.5 L11 7.5" /></svg>
              <Thumb />
            </Scroll>
          </CanvasRow>
        </Doc>
      </Workspace>
      <Menu role="menu" aria-label="ウィンドウ">
        <MenuArrow aria-label="上へスクロール"><Chevron d="up" size={10} w={1.5} c="#222" /></MenuArrow>
        <Row item={{ label: "ツールバー", sub: true }} />
        <MenuRule />
        {main.map((i) => <Row key={i.label} item={i} />)}
        <MenuRule />
        {libraries.map((i) => <Row key={i.label} item={i} />)}
      </Menu>
    </Screen>
  );
}
